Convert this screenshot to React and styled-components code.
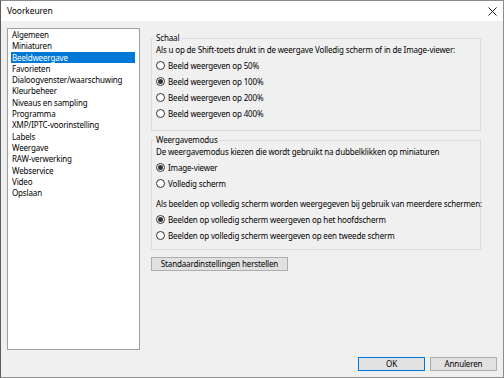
import React from 'react';
import styled, { createGlobalStyle } from 'styled-components';

const Global = createGlobalStyle`
  html, body { margin: 0; padding: 0; background: #ffffff; }
  body {
    width: 504px; height: 378px; overflow: hidden;
    font-family: "Noto Sans", "Open Sans", sans-serif;
    color: #000;
  }
  * { box-sizing: border-box; }
`;

const Window = styled.div`
  width: 504px;
  height: 378px;
  border: 1px solid #8c8c8c;
  border-left-color: #5c5c5c;
  background: #f0f0f0;
  display: flex;
  flex-direction: column;
  font-size: 8px;
  letter-spacing: -0.15px;
`;

const TitleBar = styled.div`
  height: 20px;
  background: #ffffff;
  display: flex;
  align-items: center;
  justify-content: space-between;
  padding: 0 6px 0 6px;
  flex: none;
`;

const Title = styled.span`
  font-size: 8.5px;
  letter-spacing: -0.1px;
  line-height: 20px;
`;

const CloseIcon = styled.svg`
  width: 9px;
  height: 9px;
`;

const Main = styled.div`
  flex: 1;
  display: flex;
  gap: 11px;
  padding: 7px 6px 0 6px;
  min-height: 0;
`;

const List = styled.ul`
  list-style: none;
  margin: 0;
  padding: 0 4px 0 3px;
  width: 133px;
  height: 322px;
  background: #ffffff;
  border: 1px solid #a0a0a0;
  flex: none;
`;

const Item = styled.li`
  height: 11.3px;
  line-height: 11.3px;
  padding-left: 1px;
  white-space: nowrap;
  background: ${p => (p.$selected ? '#0078d7' : 'transparent')};
  color: ${p => (p.$selected ? '#ffffff' : '#000000')};
`;

const Panel = styled.div`
  width: 330px;
  display: flex;
  flex-direction: column;
  align-items: flex-start;
  padding-top: 5px;
`;

const Group = styled.fieldset`
  width: 330px;
  margin: 0 0 ${p => p.$gap || 0}px 0;
  padding: 1px 4px ${p => p.$pb || 6}px 4px;
  border: 1px solid #dcdcdc;
  min-width: 0;
`;

const Legend = styled.legend`
  padding: 0 2px;
  margin-left: -2px;
  line-height: 10px;
`;

const Text = styled.div`
  line-height: 11px;
  margin-top: ${p => p.$mt || 0}px;
  margin-bottom: 2px;
  white-space: nowrap;
`;

const RadioRow = styled.label`
  display: flex;
  align-items: center;
  height: 16px;
  gap: 3px;
  white-space: nowrap;
`;

const RadioCircle = styled.span`
  width: 9px;
  height: 9px;
  border-radius: 50%;
  border: 1px solid #333333;
  background: #ffffff;
  display: flex;
  align-items: center;
  justify-content: center;
  flex: none;
  &::after {
    content: '';
    width: 5px;
    height: 5px;
    border-radius: 50%;
    background: ${p => (p.$checked ? '#333333' : 'transparent')};
  }
`;

const Button = styled.button`
  font-family: inherit;
  font-size: 8px;
  letter-spacing: -0.15px;
  color: #000;
  height: 14px;
  width: ${p => p.$w}px;
  padding: 0;
  line-height: 12px;
  background: #e1e1e1;
  border: 1px solid ${p => (p.$default ? '#0078d7' : '#adadad')};
  border-radius: 0;
  margin-top: ${p => p.$mt || 0}px;
`;

const Footer = styled.div`
  flex: none;
  display: flex;
  justify-content: flex-end;
  gap: 5px;
  padding: 7px 6px 6px 0;
`;

const Radio = ({ checked, children }) => (
  <RadioRow>
    <RadioCircle $checked={checked} />
    <span>{children}</span>
  </RadioRow>
);

const items = [
  'Algemeen',
  'Miniaturen',
  'Beeldweergave',
  'Favorieten',
  'Dialoogvenster/waarschuwing',
  'Kleurbeheer',
  'Niveaus en sampling',
  'Programma',
  'XMP/IPTC-voorinstelling',
  'Labels',
  'Weergave',
  'RAW-verwerking',
  'Webservice',
  'Video',
  'Opslaan',
];

export default function App() {
  return (
    <>
      <Global />
      <Window>
        <TitleBar>
          <Title>Voorkeuren</Title>
          <CloseIcon viewBox="0 0 9 9">
            <path d="M0.5 0.5 L8.5 8.5 M8.5 0.5 L0.5 8.5" stroke="#222" strokeWidth="1" fill="none" />
          </CloseIcon>
        </TitleBar>
        <Main>
          <List>
            {items.map(it => (
              <Item key={it} $selected={it === 'Beeldweergave'}>{it}</Item>
            ))}
          </List>
          <Panel>
            <Group $gap={4} $pb={9}>
              <Legend>Schaal</Legend>
              <Text>Als u op de Shift-toets drukt in de weergave Volledig scherm of in de Image-viewer:</Text>
              <Radio>Beeld weergeven op 50%</Radio>
              <Radio checked>Beeld weergeven op 100%</Radio>
              <Radio>Beeld weergeven op 200%</Radio>
              <Radio>Beeld weergeven op 400%</Radio>
            </Group>
            <Group $pb={6}>
              <Legend>Weergavemodus</Legend>
              <Text>De weergavemodus kiezen die wordt gebruikt na dubbelklikken op miniaturen</Text>
              <Radio checked>Image-viewer</Radio>
              <Radio>Volledig scherm</Radio>
              <Text $mt={7}>Als beelden op volledig scherm worden weergegeven bij gebruik van meerdere schermen:</Text>
              <Radio checked>Beelden op volledig scherm weergeven op het hoofdscherm</Radio>
              <Radio>Beelden op volledig scherm weergeven op een tweede scherm</Radio>
            </Group>
            <Button $w={137} $mt={7}>Standaardinstellingen herstellen</Button>
          </Panel>
        </Main>
        <Footer>
          <Button $w={67} $default>OK</Button>
          <Button $w={67}>Annuleren</Button>
        </Footer>
      </Window>
    </>
  );
}
